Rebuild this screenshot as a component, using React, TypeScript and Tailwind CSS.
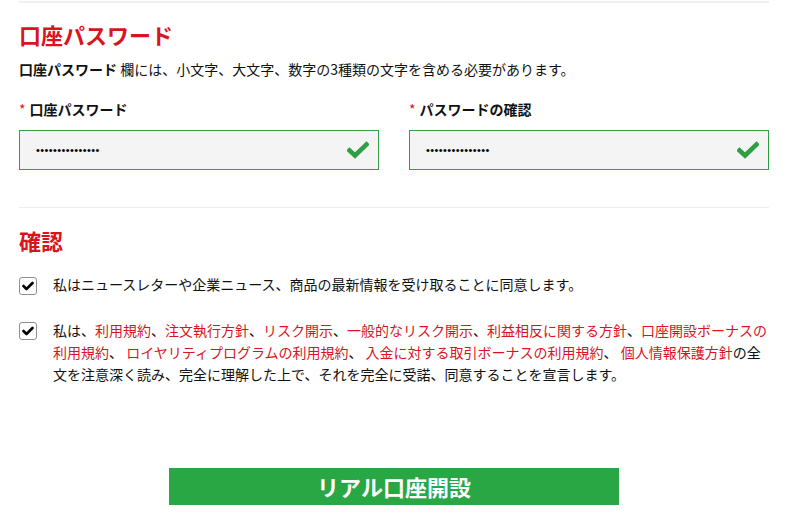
const font = { fontFamily: '"Noto Sans CJK JP", "Noto Sans", sans-serif' };

function FieldCheck() {
  return (
    <svg width="22" height="18" viewBox="0 0 22 18" className="shrink-0">
      <path d="M2.5 9.5 L8 14.5 L19.5 3.5" fill="none" stroke="#2ea043" strokeWidth="4.6" strokeLinecap="square" />
    </svg>
  );
}

function PasswordField({ label }: { label: string }) {
  return (
    <div className="flex flex-col">
      <div className="flex items-center h-5 text-sm font-bold text-[#111]">
        <span className="text-[#d9141e] mr-1 font-normal">*</span>
        {label}
      </div>
      <div className="mt-[11px] h-10 border border-[#2ea043] bg-[#f4f4f4] flex items-center justify-between pl-4 pr-[9px]">
        <span className="text-[11px] tracking-[0.4px] text-black leading-none" style={{ fontFamily: '"Liberation Sans", sans-serif' }}>
          •••••••••••••••
        </span>
        <FieldCheck />
      </div>
    </div>
  );
}

function Box() {
  return (
    <div className="w-[18px] h-[18px] shrink-0 rounded-[3px] border border-[#8f8f8f] bg-white flex items-center justify-center">
      <svg width="12" height="10" viewBox="0 0 12 10">
        <path d="M1.5 5 L4.5 8 L10.5 2" fill="none" stroke="#000" strokeWidth="2.6" strokeLinecap="round" strokeLinejoin="round" />
      </svg>
    </div>
  );
}

const R = ({ children }: { children: React.ReactNode }) => <span className="text-[#d9141e]">{children}</span>;

export default function App() {
  return (
    <div className="bg-white min-h-[524px] w-[803px]" style={font}>
      <div className="w-[750px] ml-[19px] pt-px">
        <div className="border-t-2 border-[#efefef]" />
        <h2 className="mt-4 text-[22px] leading-[30px] font-bold text-[#d9141e]">口座パスワード</h2>
        <p className="mt-[10px] text-sm leading-5 text-[#111]">
          <b>口座パスワード</b> 欄には、小文字、大文字、数字の3種類の文字を含める必要があります。
        </p>
        <div className="mt-5 grid grid-cols-2 gap-[30px]">
          <PasswordField label="口座パスワード" />
          <PasswordField label="パスワードの確認" />
        </div>
        <div className="mt-[37px] border-t border-[#ececec]" />
        <h2 className="mt-[17px] text-[22px] leading-[30px] font-bold text-[#d9141e]">確認</h2>
        <div className="mt-[18px] flex gap-4 text-sm leading-[22px] text-[#111]">
          <div className="mt-1"><Box /></div>
          <p>私はニュースレターや企業ニュース、商品の最新情報を受け取ることに同意します。</p>
        </div>
        <div className="mt-6 flex gap-4 text-sm leading-[22px] text-[#111]">
          <div className="mt-[3px]"><Box /></div>
          <p>
            私は、<R>利用規約</R>、<R>注文執行方針</R>、<R>リスク開示</R>、<R>一般的なリスク開示</R>、<R>利益相反に関する方針</R>、<R>口座開設ボーナスの利用規約</R>、 <R>ロイヤリティプログラムの利用規約</R>、 <R>入金に対する取引ボーナスの利用規約</R>、 <R>個人情報保護方針</R>の全文を注意深く読み、完全に理解した上で、それを完全に受諾、同意することを宣言します。
          </p>
        </div>
        <button className="mt-[83px] ml-[150px] w-[450px] h-[37px] bg-[#2aa745] text-white text-[22px] font-bold flex items-center justify-center">
          リアル口座開設
        </button>
      </div>
    </div>
  );
}
